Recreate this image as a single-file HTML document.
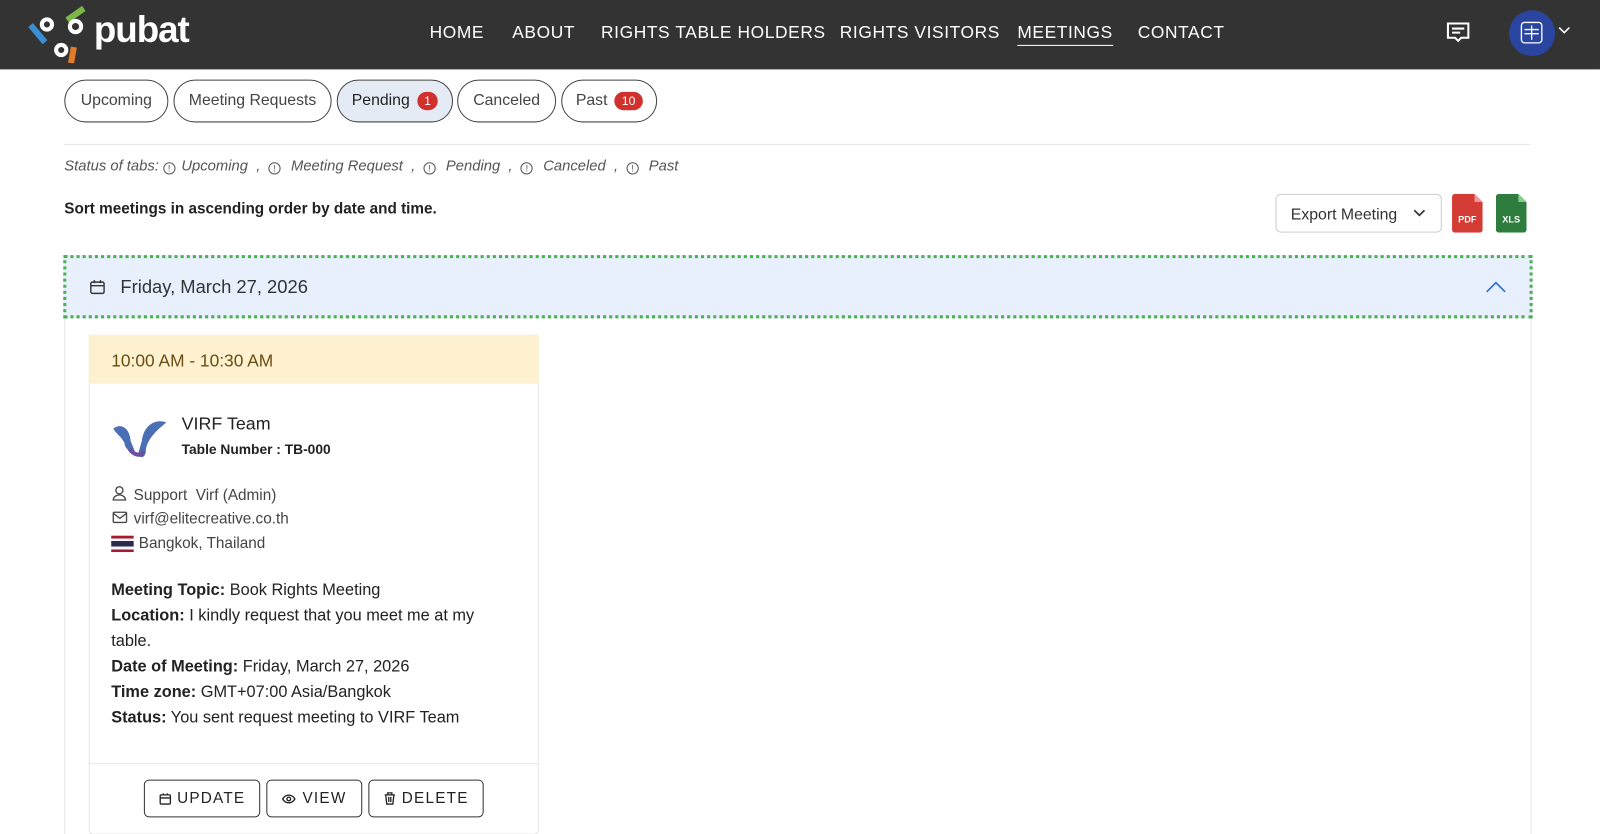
<!DOCTYPE html>
<html><head><meta charset="utf-8"><style>
*{box-sizing:border-box;margin:0;padding:0}
html,body{width:1600px;height:834px;overflow:hidden;background:#fff}
body{font-family:"Liberation Sans",sans-serif;color:#222;position:relative}
#w{position:absolute;left:0;top:0;width:1568px;height:818px;transform:scale(1.0204);transform-origin:0 0}
.hdr{position:absolute;left:0;top:0;width:1568px;height:68px;background:#333}
.nav{position:absolute;top:22px;color:#fff;font-size:17px;letter-spacing:.6px}
.tab{position:absolute;top:78px;height:42px;border:1.5px solid #444;border-radius:21px;font-size:15.5px;color:#444;display:flex;align-items:center;justify-content:center;gap:7px}
.badge{background:#d0312d;color:#fff;font-size:12px;border-radius:10px;padding:2px 7px;line-height:14px}
.abs{position:absolute}
.st{font-style:italic;color:#555;font-size:14.5px}
.ic{display:inline-block;width:12px;height:12px;border:1.3px solid #555;border-radius:50%;vertical-align:-1px;margin-right:6px;font-style:normal;font-size:9px;text-align:center;line-height:10px}
.btn{position:absolute;top:764px;height:37px;border:1.5px solid #333;border-radius:5px;font-size:15px;letter-spacing:1.2px;display:flex;align-items:center;justify-content:center;gap:6px;color:#222}
.info{font-size:16px;color:#222;line-height:25px}
</style></head><body><div id="w">
<div class="hdr">
<svg class="abs" style="left:26px;top:2px" width="70" height="60" viewBox="0 0 70 60">
<rect x="38" y="9" width="20" height="6" fill="#7ab648" transform="rotate(-35 48 12)"/>
<rect x="0" y="28" width="22" height="6" fill="#3a8fd4" transform="rotate(50 11 31)"/>
<rect x="42" y="44" width="6" height="16" fill="#e07b2a" transform="rotate(10 45 52)"/>
<circle cx="20" cy="22" r="5" fill="none" stroke="#fff" stroke-width="4"/>
<circle cx="48" cy="24" r="5.5" fill="none" stroke="#fff" stroke-width="4"/>
<circle cx="34" cy="47" r="5" fill="none" stroke="#fff" stroke-width="4"/>
</svg>
<div class="abs" style="left:92px;top:8px;color:#fff;font-size:36px;font-weight:bold;letter-spacing:-1px">pubat</div>
<div class="nav" style="left:421px">HOME</div>
<div class="nav" style="left:502px">ABOUT</div>
<div class="nav" style="left:589px">RIGHTS TABLE HOLDERS</div>
<div class="nav" style="left:823px">RIGHTS VISITORS</div>
<div class="nav" style="left:997px;border-bottom:1.5px solid #fff;padding-bottom:2px">MEETINGS</div>
<div class="nav" style="left:1115px">CONTACT</div>
<svg class="abs" style="left:1417px;top:21px" width="24" height="22" viewBox="0 0 24 22" fill="none" stroke="#fff" stroke-width="2"><path d="M2 2h20v14h-7l-3 3-3-3H2z"/><path d="M6 7h12M6 11h8"/></svg>
<div class="abs" style="left:1479px;top:10px;width:45px;height:45px;border-radius:50%;background:#2a45a0"></div>
<svg class="abs" style="left:1490px;top:21px" width="22" height="22" viewBox="0 0 22 22" fill="none" stroke="#fff" stroke-width="1.3"><rect x="1" y="1" width="20" height="20" rx="3"/><path d="M4 8h14M4 12h14M11 4v14"/></svg>
<svg class="abs" style="left:1527px;top:26px" width="12" height="8" viewBox="0 0 12 8" fill="none" stroke="#fff" stroke-width="1.6"><path d="M1 1l5 5 5-5"/></svg>
</div>

<div class="tab" style="left:63px;width:102px">Upcoming</div>
<div class="tab" style="left:170px;width:155px">Meeting Requests</div>
<div class="tab" style="left:330px;width:114px;background:#e5ebf5;color:#222">Pending <span class="badge">1</span></div>
<div class="tab" style="left:448px;width:97px">Canceled</div>
<div class="tab" style="left:550px;width:94px">Past <span class="badge">10</span></div>
<div class="abs" style="left:63px;top:141px;width:1437px;height:1px;background:#e2e2e2"></div>
<div class="abs st" style="left:63px;top:155px">Status of tabs: <span class="ic">!</span>Upcoming&nbsp; , &nbsp;<span class="ic">!</span> Meeting Request&nbsp; , &nbsp;<span class="ic">!</span> Pending&nbsp; , &nbsp;<span class="ic">!</span> Canceled&nbsp; , &nbsp;<span class="ic">!</span> Past</div>
<div class="abs" style="left:63px;top:196px;font-size:15px;font-weight:bold;color:#222">Sort meetings in ascending order by date and time.</div>
<div class="abs" style="left:1250px;top:190px;width:163px;height:38px;border:1px solid #ccc;border-radius:5px;font-size:15.5px;color:#333;padding:11px 0 0 14px">Export Meeting
<svg class="abs" style="left:134px;top:14px" width="12" height="8" viewBox="0 0 12 8" fill="none" stroke="#333" stroke-width="1.7"><path d="M1 1l5 5 5-5"/></svg></div>
<svg class="abs" style="left:1423px;top:190px" width="30" height="38" viewBox="0 0 30 38"><path d="M3 0h19l8 8v27a3 3 0 0 1-3 3H3a3 3 0 0 1-3-3V3a3 3 0 0 1 3-3z" fill="#d33b35"/><path d="M22 0v8h8z" fill="#e99"/><text x="15" y="28" font-size="9" font-weight="bold" fill="#fff" text-anchor="middle" font-family="Liberation Sans">PDF</text></svg>
<svg class="abs" style="left:1466px;top:190px" width="30" height="38" viewBox="0 0 30 38"><path d="M3 0h19l8 8v27a3 3 0 0 1-3 3H3a3 3 0 0 1-3-3V3a3 3 0 0 1 3-3z" fill="#2e7d3e"/><path d="M22 0v8h8z" fill="#8c8"/><text x="15" y="28" font-size="9" font-weight="bold" fill="#fff" text-anchor="middle" font-family="Liberation Sans">XLS</text></svg>

<div class="abs" style="left:63px;top:310px;width:1438px;height:540px;border:1px solid #e5e5e5"></div>
<div class="abs" style="left:62px;top:250px;width:1440px;height:62px;background:#e8f0fe;border:3px dotted #4caf50"></div>
<svg class="abs" style="left:88px;top:274px" width="15" height="15" viewBox="0 0 15 15" fill="none" stroke="#333" stroke-width="1.4"><rect x="1" y="2.5" width="13" height="11" rx="1.5"/><path d="M1 6h13M4.5 0.5v3M10.5 0.5v3"/></svg>
<div class="abs" style="left:118px;top:271px;font-size:18px;color:#333">Friday, March 27, 2026</div>
<svg class="abs" style="left:1456px;top:275px" width="20" height="12" viewBox="0 0 20 12" fill="none" stroke="#2a6fdb" stroke-width="1.6"><path d="M1 11l9-9 9 9"/></svg>

<div class="abs" style="left:87px;top:328px;width:441px;height:490px;border:1px solid #e5e5e5;border-radius:0 0 4px 4px"></div>
<div class="abs" style="left:87px;top:328px;width:441px;height:48px;background:#fdf1cf;color:#6b4d14;font-size:17px;padding:16px 0 0 22px">10:00 AM - 10:30 AM</div>
<svg class="abs" style="left:109px;top:408px" width="56" height="44" viewBox="0 0 56 44"><path d="M2 12c8-6 16 0 17 12l4 10c-6 2-10-4-10-8C10 20 4 16 2 12z" fill="#4a6fb5"/><path d="M54 6C44 2 32 8 30 24l-4 14c4 4 8 2 8-6 2-10 10-18 20-26z" fill="#4a6fb5"/><path d="M18 32c4 6 12 8 14 2" stroke="#6c4fa0" stroke-width="4" fill="none"/></svg>
<div class="abs" style="left:178px;top:405px;font-size:17.5px;color:#222">VIRF Team</div>
<div class="abs" style="left:178px;top:433px;font-size:13.5px;font-weight:bold;color:#222">Table Number : TB-000</div>
<svg class="abs" style="left:110px;top:476px" width="14" height="15" viewBox="0 0 14 15" fill="none" stroke="#444" stroke-width="1.3"><circle cx="7" cy="4.5" r="3.5"/><path d="M1 14c0-3 3-5 6-5s6 2 6 5z"/></svg>
<div class="abs info" style="left:131px;top:473px;color:#444;font-size:15px">Support&nbsp; Virf (Admin)</div>
<svg class="abs" style="left:110px;top:501px" width="15" height="12" viewBox="0 0 15 12" fill="none" stroke="#444" stroke-width="1.3"><rect x="1" y="1" width="13" height="10" rx="1"/><path d="M1 2l6.5 5L14 2"/></svg>
<div class="abs info" style="left:131px;top:496px;color:#444;font-size:15px">virf@elitecreative.co.th</div>
<div class="abs" style="left:109px;top:525px;width:22px;height:16px;background:linear-gradient(#a51931 0 17%,#f4f5f8 17% 33%,#2d2a4a 33% 67%,#f4f5f8 67% 83%,#a51931 83%)"></div>
<div class="abs info" style="left:136px;top:520px;color:#444;font-size:15px">Bangkok, Thailand</div>
<div class="abs info" style="left:109px;top:566px;width:375px">
<b>Meeting Topic:</b> Book Rights Meeting<br>
<b>Location:</b> I kindly request that you meet me at my table.<br>
<b>Date of Meeting:</b> Friday, March 27, 2026<br>
<b>Time zone:</b> GMT+07:00 Asia/Bangkok<br>
<b>Status:</b> You sent request meeting to VIRF Team</div>
<div class="abs" style="left:87px;top:748px;width:441px;height:1px;background:#e5e5e5"></div>
<div class="btn" style="left:141px;width:114px"><svg width="12" height="12" viewBox="0 0 12 12" fill="none" stroke="#222" stroke-width="1.3"><rect x="1" y="2" width="10" height="9" rx="1"/><path d="M1 5h10M4 0.5v2M8 0.5v2"/></svg>UPDATE</div>
<div class="btn" style="left:261px;width:94px"><svg width="14" height="10" viewBox="0 0 14 10" fill="none" stroke="#222" stroke-width="1.3"><path d="M1 5c3-5 9-5 12 0-3 5-9 5-12 0z"/><circle cx="7" cy="5" r="1.8"/></svg>VIEW</div>
<div class="btn" style="left:361px;width:113px"><svg width="12" height="13" viewBox="0 0 12 13" fill="none" stroke="#222" stroke-width="1.3"><path d="M1 3h10M4 3V1h4v2M2 3l1 9h6l1-9M5 5v5M7 5v5"/></svg>DELETE</div>
</div></body></html>
